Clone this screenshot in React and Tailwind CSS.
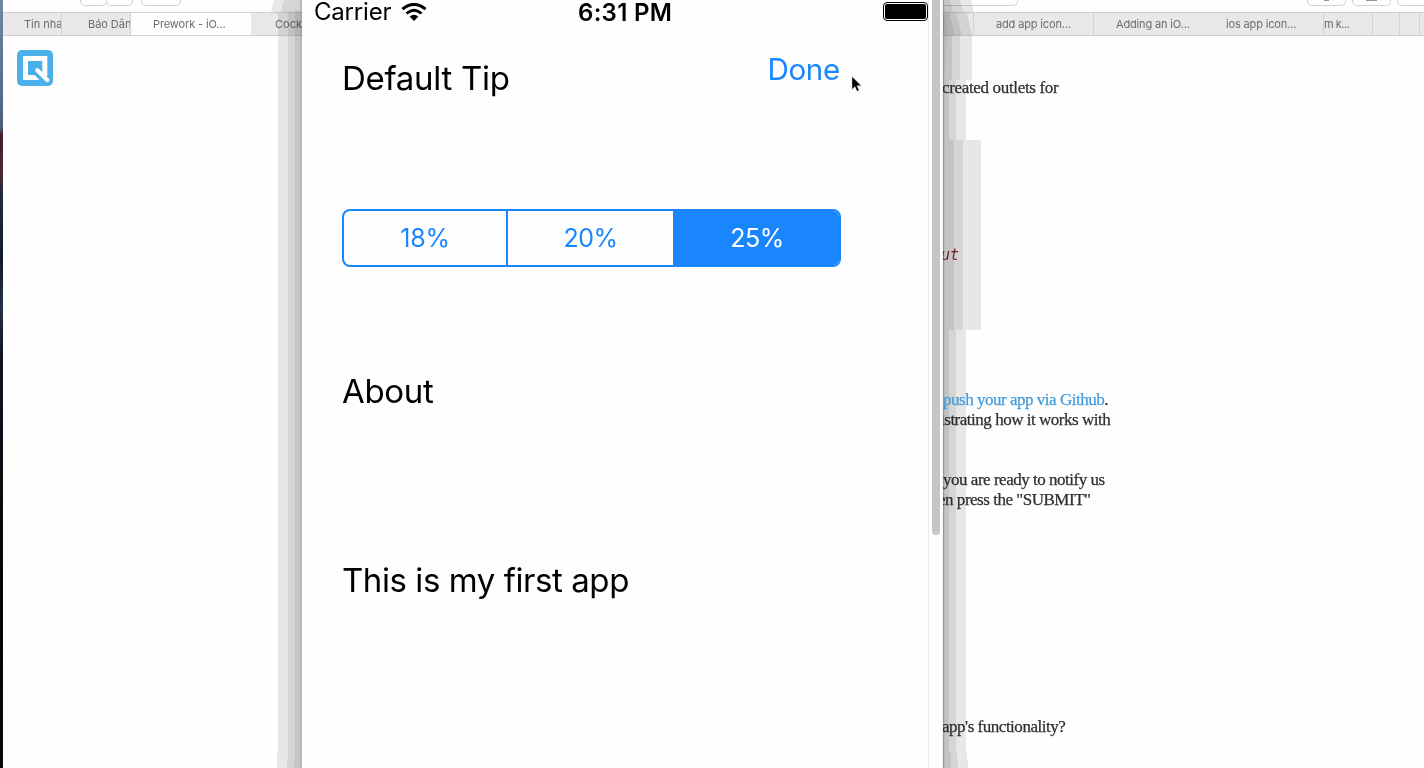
import React from "react";

const UI = "font-['Inter','Liberation_Sans',sans-serif]";
const SERIF = "font-['Liberation_Serif',serif]";

function LeftShadow() {
  return (
    <svg className="pointer-events-none absolute top-0 right-0 mix-blend-multiply" width="32" height="768" viewBox="0 0 32 768" shapeRendering="crispEdges">
      <path d="M4 0 L1 12 L8 13V35H8V752H7V768H32V0Z" fill="#e8e8e8" />
      <path d="M14 0 L11 12 L18 13V761H17V768H32V0Z" fill="#d6d6d6" />
      <path d="M25 10H32V768H24V761H25Z" fill="#c6c6c6" />
      <path d="M30 0H32V768H30Z" fill="#b8b8b8" />
    </svg>
  );
}

function RightShadow() {
  return (
    <svg className="pointer-events-none absolute top-0 left-0 mix-blend-multiply" width="40" height="768" viewBox="0 0 40 768" shapeRendering="crispEdges">
      <path d="M0 0H28L31 12L24 13L29 35V80H23V140H38V330H23V752H24L25 768H0Z" fill="#e8e8e8" />
      <path d="M0 0H17L21 12L13 13L19 35V35H17V80H13V140H20V330H13V752H14L15 768H0Z" fill="#d6d6d6" />
      <path d="M0 0H7L10 12H6L12 35H9V80H6V140H11V330H6V752H8V768H0Z" fill="#c5c5c5" />
      <path d="M0 0H1L3 18L4 35L2 80V768H0Z" fill="#b9b9b9" />
      <path d="M0 0H1V768H0Z" fill="#999999" />
    </svg>
  );
}

function Tab({ className, children }) {
  return (
    <div className={`flex h-full shrink-0 items-center overflow-hidden border-[#d2d2d2] whitespace-nowrap ${className}`}>
      <span>{children}</span>
    </div>
  );
}

function ToolbarButton({ className, children }) {
  return (
    <div className={`flex h-1.5 shrink-0 justify-center rounded-b-[5px] border border-t-0 border-[#d2d2d2] bg-white ${className}`}>
      {children}
    </div>
  );
}

function QLogo() {
  return (
    <svg className="mt-3.5 ml-3.5 shrink-0" width="36" height="36" viewBox="0 0 36 36">
      <rect width="36" height="36" rx="5" fill="#4bb0ea" />
      <path d="M22.5 27.5H8.5V8.5H27.8V26" fill="none" stroke="#fff" strokeWidth="5" />
      <path d="M16.5 21.5L28 33" stroke="#4bb0ea" strokeWidth="3.5" />
      <path d="M20.3 20.3L30.3 30" stroke="#fff" strokeWidth="4.2" strokeLinecap="round" />
    </svg>
  );
}

function LeftBrowser() {
  return (
    <div className="relative flex w-[299px] shrink-0 flex-col overflow-hidden bg-[#fefefe]">
      <div className="flex h-3 shrink-0 pl-[77px]">
        <ToolbarButton className="w-[27px]" />
        <ToolbarButton className="-ml-px w-[27px]" />
        <ToolbarButton className="ml-2 w-10" />
      </div>
      <div className={`flex h-6 shrink-0 border-y border-[#d2d2d2] bg-[#e8e8e8] text-[11px] text-[#6c6c6c] ${UI}`}>
        <Tab className="w-[59px] border-r pl-[21px]">Tin nhanh</Tab>
        <Tab className="w-[69px] border-r pl-[26px] tracking-[-0.05px]">Báo Dân trí</Tab>
        <Tab className="w-[120px] bg-[#fefefe] pl-[22px] tracking-[-0.12px]">Prework - iO...</Tab>
        <Tab className="w-[51px] pl-6">Cockpit</Tab>
      </div>
      <QLogo />
      <LeftShadow />
    </div>
  );
}

function Wifi() {
  return (
    <svg className="ml-[10px] mt-[-1px]" width="26" height="18" viewBox="0 0 26 18" fill="none" stroke="#000">
      <path d="M1.4 6.2Q13 -3.4 24.6 6.2" strokeWidth="2.9" />
      <path d="M5.5 10.5Q13 4 20.5 10.5" strokeWidth="2.9" />
      <path d="M8.6 13.6Q13 9.8 17.4 13.6L13 18Z" fill="#000" stroke="none" />
    </svg>
  );
}

function SegmentedControl() {
  return (
    <div className="flex h-[58px] w-[499px] overflow-hidden rounded-lg border-2 border-[#1a86fd] text-[25px] text-[#1a86fd]">
      <div className="flex w-[164px] items-center justify-center border-r-2 border-[#1a86fd] pt-0.5 tracking-[-0.2px]">18%</div>
      <div className="flex w-[165px] items-center justify-center pt-0.5 tracking-[-0.5px]">20%</div>
      <div className="flex flex-1 items-center justify-center bg-[#1a86fd] pt-0.5 pl-0.5 tracking-[-0.5px] text-white">25%</div>
    </div>
  );
}

function Simulator() {
  return (
    <div className={`flex w-[641px] shrink-0 bg-[#fefefe] text-black ${UI}`}>
      <div className="relative flex w-[626px] shrink-0 flex-col">
        <header className="flex h-6 items-center">
          <div className="flex w-[276px] items-center pl-3 text-[24px] leading-6 tracking-[-0.2px]">
            <span>Carrier</span>
            <Wifi />
          </div>
          <div className="w-[305px] pt-px text-[24px] leading-6 font-semibold tracking-[0.3px]">6:31 PM</div>
          <div className="mt-[-2px] h-[19px] w-[45px] rounded-[4px] border border-black bg-white p-px">
            <div className="h-full rounded-[2px] bg-black" />
          </div>
        </header>
        <div className="mt-7 flex justify-between pr-[88px] pl-10">
          <h1 className="pt-2 text-[33px] leading-[36px] tracking-[-0.3px]">Default Tip</h1>
          <span className="text-[29.5px] leading-[35px] tracking-[-0.25px] text-[#1a86fd]">Done</span>
        </div>
        <div className="mt-[113px] pl-10">
          <SegmentedControl />
        </div>
        <h2 className="mt-[106px] pl-10 text-[33px] leading-[36px] tracking-[-0.3px]">About</h2>
        <p className="mt-[153px] pl-10 text-[33px] leading-[36px] tracking-[-0.43px]">This is my first app</p>
        <svg className="absolute top-[75px] left-[549px]" width="12" height="19" viewBox="0 0 12 19">
          <path d="M1 1V15L4 12L6.5 17.5L9 16.3L6.7 11.2H11Z" fill="#fff" stroke="#ddd" strokeWidth="0.8" />
          <path d="M1.2 2V14L4 11.2L6.2 16L7.8 15.2L5.7 10.5H9.8Z" fill="#000" />
        </svg>
      </div>
      <div className="flex flex-1 justify-between border-l border-[#e8e8e8]">
        <div className="ml-[3px] h-[535px] w-2 rounded-b bg-[#c5c5c5]" />
        <div className="w-px bg-[#f3f3f3]" />
      </div>
    </div>
  );
}

function RightBrowser() {
  return (
    <div className="relative flex w-[481px] shrink-0 flex-col overflow-hidden bg-[#fefefe]">
      <div className="flex h-3 shrink-0">
        <ToolbarButton className="w-[75px] rounded-bl-none border-l-0" />
        <ToolbarButton className="ml-[289px] w-[39px]"><div className="h-px w-[5px] bg-[#999999]" /></ToolbarButton>
        <ToolbarButton className="ml-1.5 w-[39px]"><div className="h-px w-[11px] bg-[#999999]" /></ToolbarButton>
        <ToolbarButton className="ml-1.5 w-[39px]" />
      </div>
      <div className={`flex h-6 shrink-0 border-y border-[#d2d2d2] bg-[#e8e8e8] text-[11px] tracking-[-0.15px] text-[#6c6c6c] ${UI}`}>
        <Tab className="w-[31px] border-r" />
        <Tab className="w-[120px] border-r pl-[22px]">add app icon...</Tab>
        <Tab className="w-[110px] pl-[22px]">Adding an iO...</Tab>
        <Tab className="w-[120px] border-r pl-[22px]">ios app icon...</Tab>
        <Tab className="w-[49px] border-r tracking-[-0.5px]">m k...</Tab>
        <Tab className="w-[27px] border-r" />
        <Tab className="w-5 border-r" />
        <Tab className="flex-1" />
      </div>
      <RightShadow />
      <main className={`relative text-[17px] leading-5 tracking-[-0.48px] whitespace-nowrap text-[#2e2e2e] [-webkit-text-stroke:0.25px] ${SERIF}`}>
        <p className="mt-[42px] -ml-px tracking-[-0.34px]">created outlets for</p>
        <p className="mt-[147px] font-['DejaVu_Sans_Mono',monospace] text-[15px] tracking-normal text-[#741a2b] italic [-webkit-text-stroke:0px]"><span className="-ml-[2px]">ut</span></p>
        <p className="mt-[125px]"><a className="text-[#459bdc]">push your app via Github</a>.</p>
        <p className="-ml-[3px]">istrating how it works with</p>
        <p className="mt-10">you are ready to notify us</p>
        <p className="-ml-[5px]">en press the "SUBMIT"</p>
        <p className="mt-[207px] -ml-px">app's functionality?</p>
      </main>
    </div>
  );
}

export default function App() {
  return (
    <div className="flex h-[768px] w-[1424px] overflow-hidden bg-[#fefefe]">
      <div className="w-[3px] shrink-0 bg-[linear-gradient(to_bottom,#7186a5_0px,#526b91_100px,#4c5d79_128px,#451f2d_135px,#4d2630_175px,#202b3c_190px,#131b28_260px,#29304a_305px,#0d131e_360px,#090f17_450px,#040608_600px,#070b0a_768px)]" />
      <LeftBrowser />
      <Simulator />
      <RightBrowser />
    </div>
  );
}
